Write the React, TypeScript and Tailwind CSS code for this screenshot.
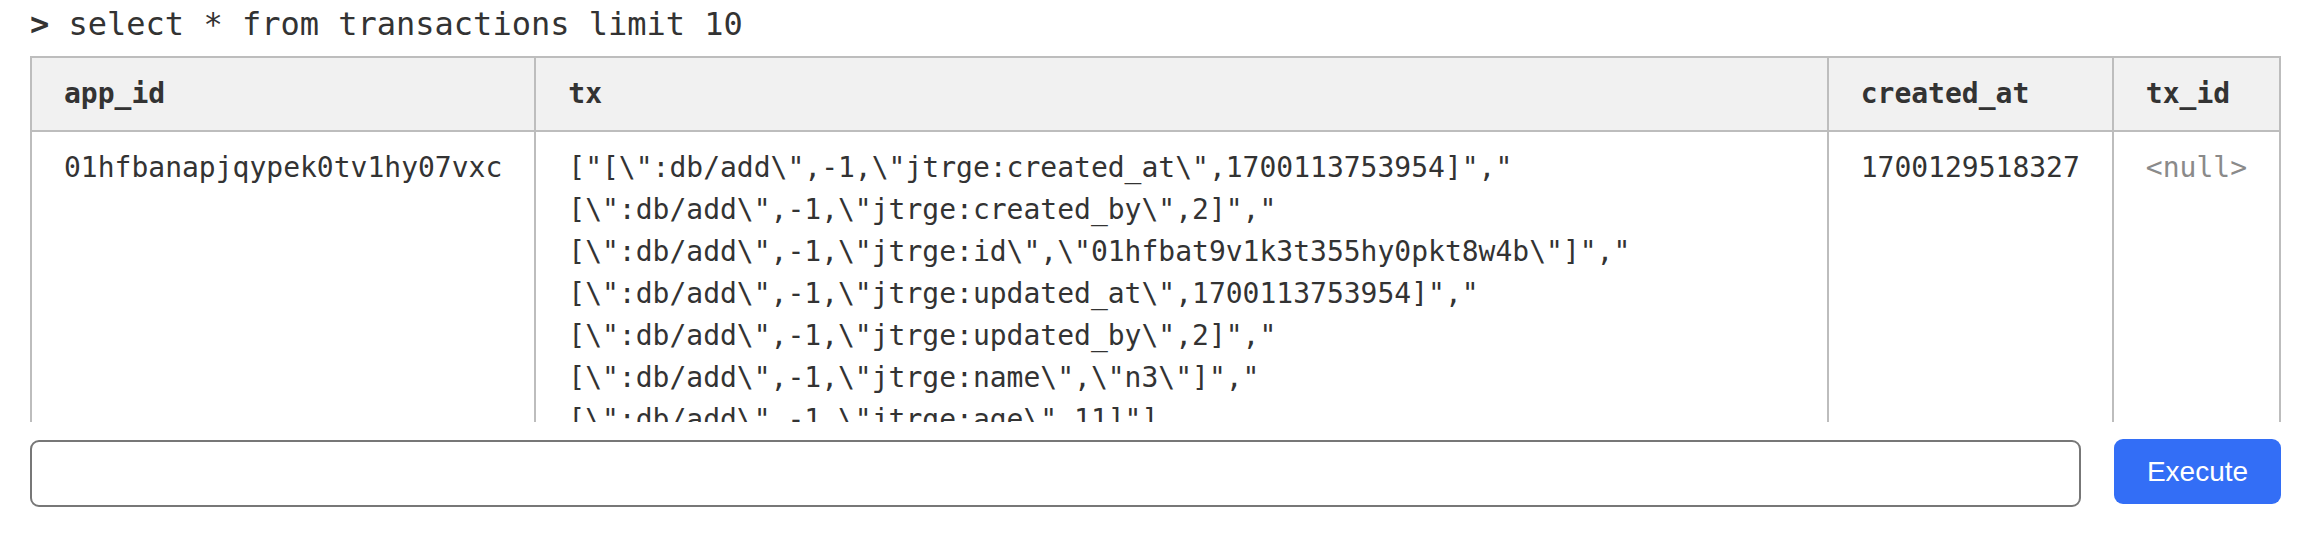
const txLines = [
  '["[\\":db/add\\",-1,\\"jtrge:created_at\\",1700113753954]","',
  '[\\":db/add\\",-1,\\"jtrge:created_by\\",2]","',
  '[\\":db/add\\",-1,\\"jtrge:id\\",\\"01hfbat9v1k3t355hy0pkt8w4b\\"]","',
  '[\\":db/add\\",-1,\\"jtrge:updated_at\\",1700113753954]","',
  '[\\":db/add\\",-1,\\"jtrge:updated_by\\",2]","',
  '[\\":db/add\\",-1,\\"jtrge:name\\",\\"n3\\"]","',
  '[\\":db/add\\",-1,\\"jtrge:age\\",11]"]',
];

const rows = [
  {
    app_id: "01hfbanapjqypek0tv1hy07vxc",
    tx: txLines,
    created_at: "1700129518327",
    tx_id: null as string | null,
  },
];

const App = () => {
  return (
    <div className="w-[2302px] h-[540px] bg-white pl-[30px] pr-[21px] font-['DejaVu_Sans_Mono',monospace] text-[#333]">
      <div className="h-[48px] text-[32px] leading-[48px] whitespace-pre">
        <span className="font-bold">&gt;</span> select * from transactions limit 10
      </div>

      <div className="mt-[8px] h-[366px] overflow-hidden">
        <table className="w-full border-collapse border-2 border-[#bdbdbd] text-[28px] leading-[42px]">
          <thead>
            <tr className="bg-[#f1f1f1] text-left">
              <th className="w-[504px] border-2 border-[#bdbdbd] px-[32px] py-[15px] font-bold">app_id</th>
              <th className="border-2 border-[#bdbdbd] px-[32px] py-[15px] font-bold">tx</th>
              <th className="w-[285px] border-2 border-[#bdbdbd] px-[32px] py-[15px] font-bold">created_at</th>
              <th className="w-[167px] border-2 border-[#bdbdbd] px-[32px] py-[15px] font-bold">tx_id</th>
            </tr>
          </thead>
          <tbody>
            {rows.map((r) => (
              <tr key={r.app_id} className="align-top">
                <td className="border-2 border-[#bdbdbd] px-[32px] py-[15px] whitespace-nowrap">{r.app_id}</td>
                <td className="border-2 border-[#bdbdbd] px-[32px] py-[15px]">
                  {r.tx.map((line, i) => (
                    <div key={i} className="whitespace-pre">
                      {line}
                    </div>
                  ))}
                </td>
                <td className="border-2 border-[#bdbdbd] px-[32px] py-[15px] whitespace-nowrap">{r.created_at}</td>
                <td className="border-2 border-[#bdbdbd] px-[32px] py-[15px] whitespace-nowrap">
                  {r.tx_id ?? <span className="text-[#8a8a8a]">&lt;null&gt;</span>}
                </td>
              </tr>
            ))}
          </tbody>
        </table>
      </div>

      <div className="mt-[17px] flex items-start gap-[33px]">
        <input
          type="text"
          className="mt-[1px] h-[67px] flex-1 rounded-[9px] border-2 border-[#777] bg-white px-4 text-[28px] outline-none"
        />
        <button className="h-[65px] w-[167px] rounded-[9px] bg-[#336ef6] font-['Liberation_Sans',Arial,sans-serif] text-[28px] text-white">
          Execute
        </button>
      </div>
    </div>
  );
};

export default App;
